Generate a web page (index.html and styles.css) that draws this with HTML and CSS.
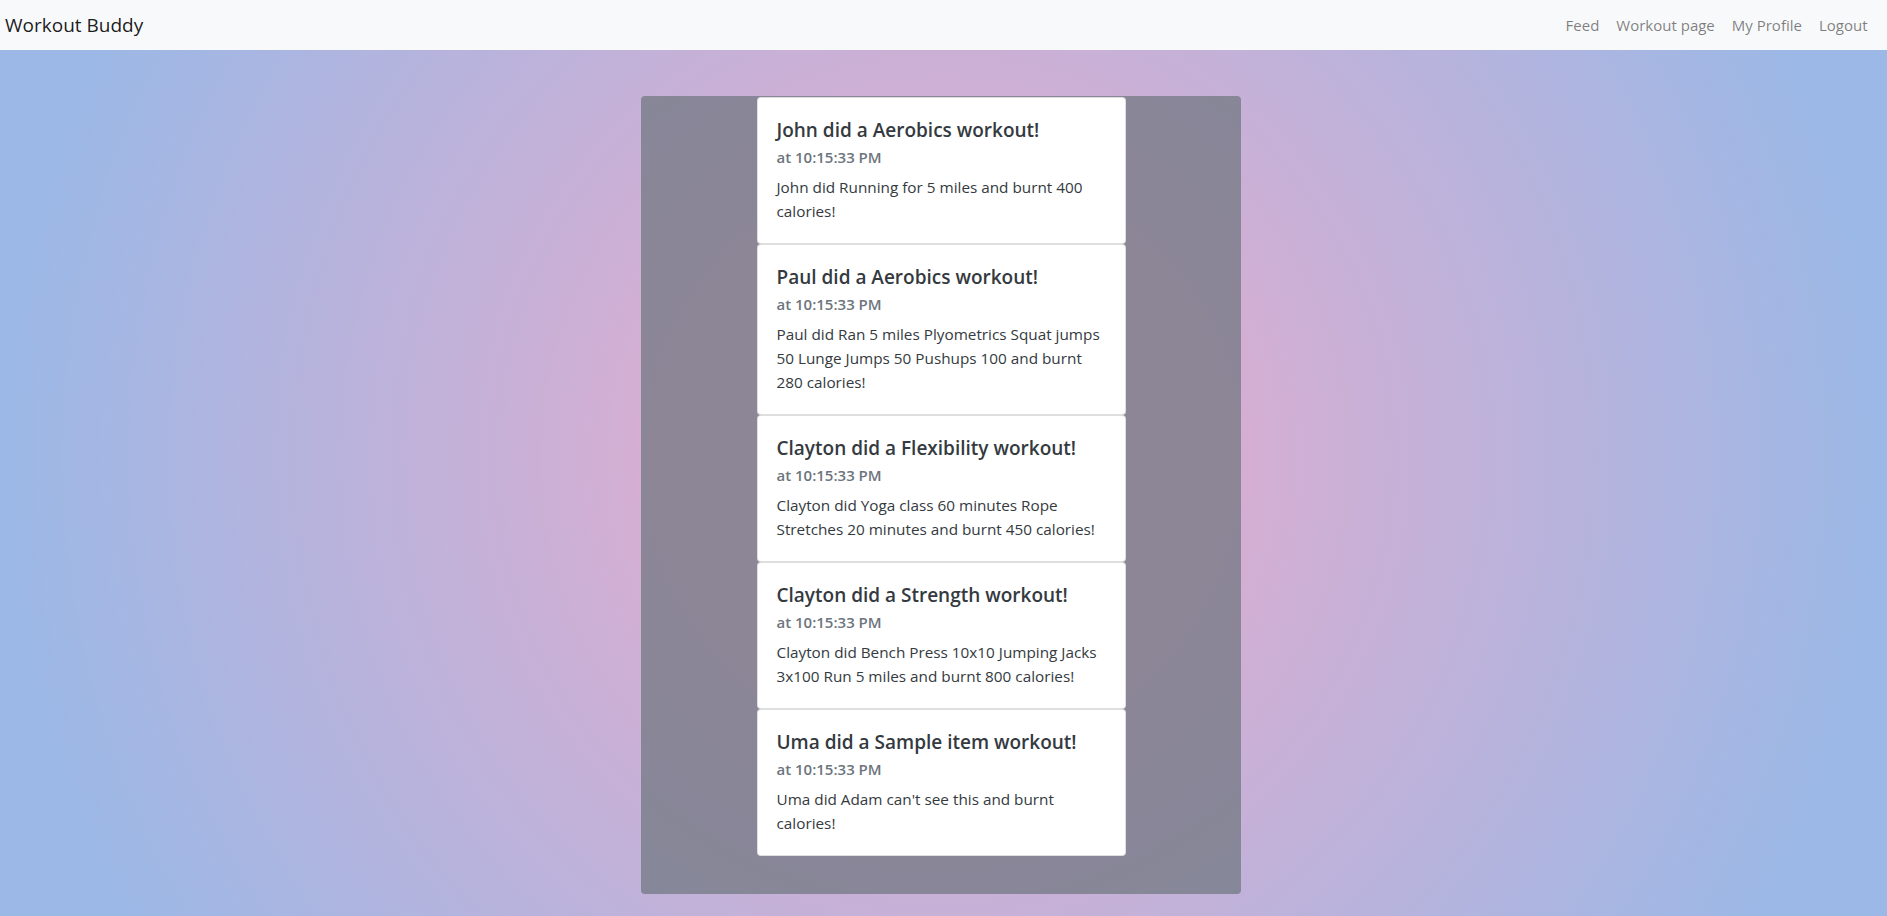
FILE: index.html
```html
<!DOCTYPE html>
<html lang="en">
<head>
<meta charset="utf-8">
<title>Workout Buddy</title>
<link rel="stylesheet" href="styles.css">
</head>
<body>
<nav class="navbar">
  <a class="brand" href="#">Workout Buddy</a>
  <ul class="nav-links">
    <li><a href="#">Feed</a></li>
    <li><a href="#">Workout page</a></li>
    <li><a href="#">My Profile</a></li>
    <li><a href="#">Logout</a></li>
  </ul>
</nav>
<main class="page">
  <section class="panel">
    <div class="feed">
      <article class="card">
        <h5 class="card-title">John did a Aerobics workout!</h5>
        <h6 class="card-subtitle">at 10:15:33 PM</h6>
        <p class="card-text">John did Running for 5 miles and burnt 400 calories!</p>
      </article>
      <article class="card">
        <h5 class="card-title">Paul did a Aerobics workout!</h5>
        <h6 class="card-subtitle">at 10:15:33 PM</h6>
        <p class="card-text">Paul did Ran 5 miles Plyometrics Squat jumps 50 Lunge Jumps 50 Pushups 100 and burnt 280 calories!</p>
      </article>
      <article class="card">
        <h5 class="card-title">Clayton did a Flexibility workout!</h5>
        <h6 class="card-subtitle">at 10:15:33 PM</h6>
        <p class="card-text">Clayton did Yoga class 60 minutes Rope Stretches 20 minutes and burnt 450 calories!</p>
      </article>
      <article class="card">
        <h5 class="card-title">Clayton did a Strength workout!</h5>
        <h6 class="card-subtitle">at 10:15:33 PM</h6>
        <p class="card-text">Clayton did Bench Press 10x10 Jumping Jacks 3x100 Run 5 miles and burnt 800 calories!</p>
      </article>
      <article class="card">
        <h5 class="card-title">Uma did a Sample item workout!</h5>
        <h6 class="card-subtitle">at 10:15:33 PM</h6>
        <p class="card-text">Uma did Adam can't see this and burnt calories!</p>
      </article>
    </div>
  </section>
</main>
</body>
</html>
```

FILE: styles.css
```css
* { box-sizing: border-box; }

html, body {
  margin: 0;
  height: 100%;
}

body {
  font-family: "Open Sans", "Noto Sans", sans-serif;
  font-size: 15px;
  line-height: 24px;
  color: #212529;
  background: radial-gradient(circle farthest-side at 50% 50%, #d6aed2 30%, #9bb8e6 100%);
  background-attachment: fixed;
  min-height: 916px;
}

.navbar {
  height: 50px;
  background: #f8f9fa;
  display: flex;
  align-items: center;
  justify-content: space-between;
  padding: 0 11px 0 5px;
}

.brand {
  font-size: 19px;
  color: rgba(0, 0, 0, 0.9);
  text-decoration: none;
  line-height: 28px;
}

.nav-links {
  list-style: none;
  margin: 0;
  padding: 0;
  display: flex;
}

.nav-links a {
  display: block;
  padding: 0 8.5px;
  font-size: 15px;
  color: rgba(0, 0, 0, 0.5);
  text-decoration: none;
}

.page {
  display: flex;
  justify-content: center;
  padding: 46px 5px 0 0;
}

.panel {
  width: 600px;
  background: rgba(108, 117, 125, 0.7);
  border-radius: 4px;
  padding: 1px 0 38px;
  display: flex;
  justify-content: center;
}

.feed {
  width: 369px;
  display: flex;
  flex-direction: column;
}

.card {
  background: #fff;
  border: 1px solid rgba(0, 0, 0, 0.125);
  border-radius: 4px;
  padding: 20px 19px 20.4px 19px;
}

.card-title {
  margin: 0 0 12px;
  font-size: 19px;
  font-weight: 600;
  line-height: 24px;
  color: #343a40;
}

.card-subtitle {
  margin: -6px 0 8px;
  font-size: 15px;
  font-weight: 600;
  line-height: 18.6px;
  color: #6c757d;
}

.card-text {
  margin: 0;
  font-size: 15.3px;
  color: #343a40;
}
```
